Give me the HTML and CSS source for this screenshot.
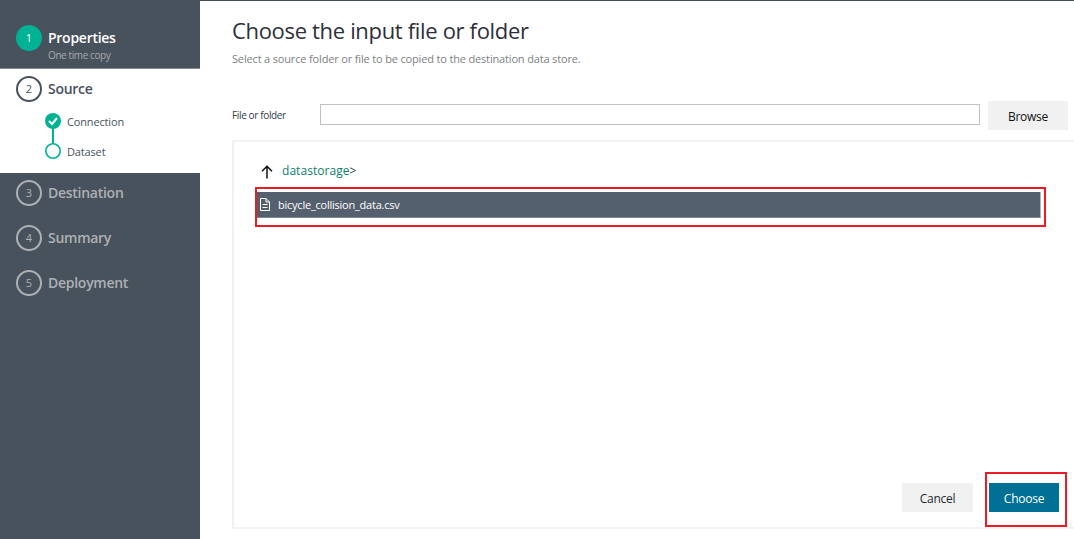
FILE: index.html
```html
<!DOCTYPE html>
<html lang="en">
<head>
<meta charset="utf-8">
<title>Copy Data</title>
<link rel="stylesheet" href="styles.css">
</head>
<body>
<div class="app">
  <nav class="sidebar">
    <section class="step step-done">
      <span class="num">1</span>
      <div class="step-text"><span class="name">Properties</span><span class="note">One time copy</span></div>
    </section>
    <section class="step-active">
      <div class="step-head"><span class="num">2</span><span class="name">Source</span></div>
      <div class="substeps">
        <svg class="track" width="18" height="48" viewBox="0 0 18 48">
          <path d="M8 10V32" stroke="#00b294" stroke-width="2"/>
          <circle cx="8" cy="9" r="8" fill="#00b294"/>
          <path d="M4 9l3 3 5-6" fill="none" stroke="#fff" stroke-width="2"/>
          <circle cx="8" cy="39" r="7.200" fill="#fff" stroke="#00b294" stroke-width="1.600"/>
        </svg>
        <div class="sub-labels"><span class="sub-connection">Connection</span><span class="sub-dataset">Dataset</span></div>
      </div>
    </section>
    <section class="step step-next"><span class="num">3</span><span class="name destination">Destination</span></section>
    <section class="step step-next"><span class="num">4</span><span class="name summary">Summary</span></section>
    <section class="step step-next"><span class="num">5</span><span class="name deployment">Deployment</span></section>
  </nav>
  <main class="content">
    <h1><span>Choose the input file or folder</span></h1>
    <p class="intro"><span>Select a source folder or file to be copied to the destination data store.</span></p>
    <div class="field">
      <label for="path"><span>File or folder</span></label>
      <input id="path" type="text">
      <button class="btn browse"><span>Browse</span></button>
    </div>
    <div class="panel">
      <div class="crumbs">
        <svg width="12" height="14" viewBox="0 0 12 14" fill="none" stroke="#111" stroke-width="1.5"><path d="M6 13.5V1.4M1 6.2L6 1.2l5 5"/></svg>
        <span class="crumb">datastorage</span><span class="sep">&gt;</span>
      </div>
      <div class="highlight file-highlight">
        <div class="file">
          <svg width="10" height="13" viewBox="0 0 10 13" fill="none" stroke="#fff"><path d="M.5.5H6L9.5 4v8.500H.5zM6 .5V4h3.500M2.500 6.500h5M2.500 9.500h5"/></svg>
          <span class="file-name">bicycle_collision_data.csv</span>
        </div>
      </div>
      <div class="actions">
        <button class="btn cancel"><span>Cancel</span></button>
        <div class="highlight choose-highlight"><button class="btn choose"><span>Choose</span></button></div>
      </div>
    </div>
  </main>
</div>
</body>
</html>
```
FILE: styles.css
```css
* { box-sizing: border-box; }
body { margin: 0; background: #fff; font-family: "Open Sans", "Noto Sans", sans-serif; font-size: 12px; overflow: hidden; }
.app { display: flex; width: 1074px; height: 539px; overflow: hidden; }
.sidebar { width: 200px; flex: none; background: #48525d; color: #aeb1b4; }
.num { width: 26px; height: 26px; flex: none; border: 2px solid currentColor; border-radius: 50%; display: flex; align-items: center; justify-content: center; font-size: 11px; line-height: 20px; }
.step { display: flex; padding-left: 16px; gap: 6px; }
.name { font-size: 14px; font-weight: 600; line-height: 20px; letter-spacing: -.27px; white-space: nowrap; }
.step-done { height: 69px; padding-top: 25px; border-bottom: 1px solid #858b93; }
.step-done .num { background: #00b294; border-color: #00b294; color: #fff; }
.step-done .name { color: #fff; margin-top: 3px; }
.step-text { display: flex; flex-direction: column; }
.note { font-size: 10px; line-height: 14px; letter-spacing: -.4px; color: #a4a8ad; }
.step-active { height: 104px; margin-bottom: 7px; background: #fff; color: #48525d; padding: 7px 0 0 16px; }
.step-head { display: flex; gap: 6px; }
.step-head .name { margin-top: 3px; }
.substeps { display: flex; gap: 4px; margin: 10px 0 0 29px; }
.track { flex: none; }
.sub-labels { display: flex; flex-direction: column; align-items: flex-start; gap: 12px; line-height: 18px; font-size: 11px; letter-spacing: -.15px; padding-top: 1px; }
.step-next { height: 45px; }
.step-next .name { margin-top: 3px; }

.content { flex: 1; min-width: 0; padding: 15px 0 0 32px; border-top: 1px solid #48525d; overflow: hidden; }
h1 { margin: 0; font-size: 22px; line-height: 28px; font-weight: 400; letter-spacing: -.33px; color: #2d3038; white-space: nowrap; }
.intro { margin: 6px 0 0; font-size: 11px; line-height: 18px; letter-spacing: -.16px; color: #7d7f82; white-space: nowrap; }
.field { display: flex; margin-top: 33px; height: 29px; }
.field label { width: 88px; font-size: 10px; line-height: 29px; letter-spacing: -.36px; color: #343b45; white-space: nowrap; }
.field input { width: 660px; height: 21px; margin: 3px 8px 0 0; border: 1px solid #c0c0c0; padding: 0 4px; outline: none; }
.btn { border: 0; border-radius: 0; padding: 0; height: 29px; background: #f1f1f1; color: #242a31; font: 12px/29px "Open Sans", "Noto Sans", sans-serif; letter-spacing: -.25px; }
.browse { width: 80px; padding-top: 1px; color: #111; }
.cancel, .choose { padding-top: 1px; }
.panel { display: flex; flex-direction: column; width: 860px; height: 389px; margin-top: 10px; border: 2px solid #f0f0f0; border-top-color: #f3f3f3; border-bottom-color: #f3f3f3; padding: 19px 0 0 21px; }
.crumbs { display: flex; align-items: center; height: 20px; padding-left: 6px; line-height: 20px; color: #333; }
.crumbs svg { margin: 1px 9px 0 0; }
.crumb { color: #0c806d; letter-spacing: .05px; }
.highlight { border: 2px solid #ed1c24; }
.file-highlight { width: 791px; height: 40px; margin-top: 6px; padding: 3px 3px 0 0; }
.file { display: flex; align-items: center; height: 26px; background: #54606e; border-right: 1px solid #b2b8be; border-bottom: 1px solid #7d8792; color: #fff; padding-left: 3px; }
.file-name { font-size: 11px; letter-spacing: -.23px; margin-left: 8px; }
.actions { display: flex; align-items: flex-start; margin: 245px 0 0 647px; }
.cancel { width: 71px; margin: 11px 12px 0 0; }
.choose-highlight { width: 82px; height: 55px; padding: 9px 0 0 2px; }
.choose { width: 70px; color: #fff; background: #007194; }
```
